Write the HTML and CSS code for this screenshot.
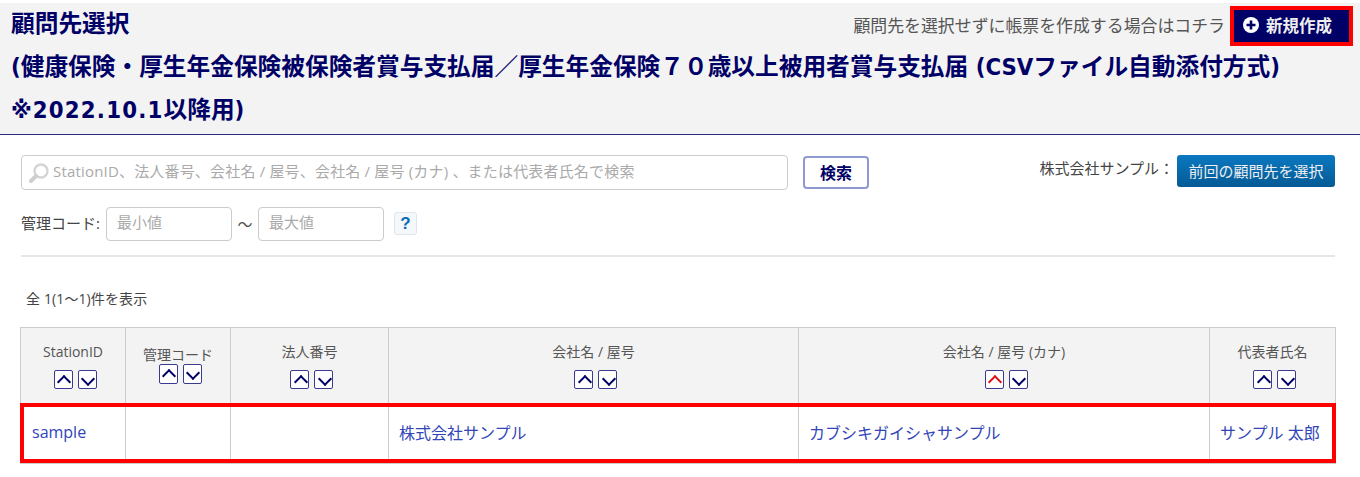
FILE: index.html
```html
<!DOCTYPE html>
<html lang="ja">
<head>
<meta charset="utf-8">
<title>顧問先選択</title>
<link rel="stylesheet" href="styles.css">
</head>
<body>
<header class="page-head">
  <div class="head-top">
    <h1 class="title">顧問先選択</h1>
    <div class="head-action">
      <span class="hint">顧問先を選択せずに帳票を作成する場合はコチラ</span>
      <a class="new-btn">
        <svg class="plus" viewBox="0 0 16 16" width="16" height="16"><circle cx="8" cy="8" r="8" fill="#fff"/><path d="M8 3.5v9M3.5 8h9" stroke="#000066" stroke-width="2.6"/></svg>
        新規作成
      </a>
    </div>
  </div>
  <div class="title">(健康保険・厚生年金保険被保険者賞与支払届／厚生年金保険７０歳以上被用者賞与支払届 (CSVファイル自動添付方式)</div>
  <div class="title">※<span class="date">2022.10.1</span>以降用)</div>
</header>

<section class="search">
  <div class="search-row">
    <div class="search-box">
      <svg class="loupe" viewBox="0 0 22 22" width="22" height="22"><circle cx="13" cy="9" r="6.5" fill="#fff" stroke="#d4d4d4" stroke-width="2.4"/><path d="M8 14l-5 5" stroke="#cfcfcf" stroke-width="4" stroke-linecap="round"/></svg>
      <span class="ph wide">StationID、法人番号、会社名 / 屋号、会社名 / 屋号 (カナ) 、または代表者氏名で検索</span>
    </div>
    <button class="search-btn">検索</button>
    <div class="prev">
      <span class="prev-label">株式会社サンプル：</span>
      <a class="prev-btn">前回の顧問先を選択</a>
    </div>
  </div>
  <div class="code-row">
    <span class="code-label">管理コード:</span>
    <span class="code-input"><span class="ph">最小値</span></span>
    <span class="tilde">～</span>
    <span class="code-input"><span class="ph">最大値</span></span>
    <span class="help">?</span>
  </div>
</section>

<p class="count">全 1(1～1)件を表示</p>

<div class="table-wrap">
<table class="list">
  <thead>
    <tr>
      <th class="c1"><div class="th-label">StationID</div><div class="sort"><a class="s up"></a><a class="s down"></a></div></th>
      <th class="c2 tight"><div class="th-label">管理コード</div><div class="sort"><a class="s big up"></a><a class="s big down"></a></div></th>
      <th class="c3"><div class="th-label">法人番号</div><div class="sort"><a class="s up"></a><a class="s down"></a></div></th>
      <th class="c4"><div class="th-label">会社名 / 屋号</div><div class="sort"><a class="s up"></a><a class="s down"></a></div></th>
      <th class="c5"><div class="th-label">会社名 / 屋号 (カナ)</div><div class="sort"><a class="s up active"></a><a class="s down"></a></div></th>
      <th class="c6"><div class="th-label">代表者氏名</div><div class="sort"><a class="s up"></a><a class="s down"></a></div></th>
    </tr>
  </thead>
  <tbody>
    <tr>
      <td><a>sample</a></td>
      <td></td>
      <td></td>
      <td><a>株式会社サンプル</a></td>
      <td><a>カブシキガイシャサンプル</a></td>
      <td><a>サンプル 太郎</a></td>
    </tr>
  </tbody>
</table>
<div class="row-mark"></div>
</div>
</body>
</html>
```

FILE: styles.css
```css
* { box-sizing: border-box; }
html, body { margin: 0; padding: 0; }
body {
  padding-top: 3px;
  background: #fff;
  color: #444;
  font-family: "Open Sans", "Noto Sans CJK JP", sans-serif;
  font-size: 15px;
}
.page-head {
  height: 132px;
  padding-left: 11px;
  background: #f3f3f3;
  border-bottom: 1px solid #2a2a80;
}
.head-top { display: flex; justify-content: space-between; align-items: flex-start; }
.title {
  margin: 0;
  height: 42.5px;
  line-height: 42px;
  font-family: "DejaVu Sans Condensed", "Noto Sans CJK JP", sans-serif;
  font-size: 23.7px;
  font-weight: 700;
  color: #000066;
  white-space: nowrap;
}
.date { letter-spacing: 1.2px; margin-left: 1px; }
.head-action { display: flex; align-items: center; padding: 3px 7px 0 0; }
.hint { font-size: 16.9px; color: #555; margin-right: 5px; position: relative; top: -2px; }
.new-btn {
  display: flex;
  align-items: center;
  gap: 7px;
  width: 123px;
  height: 40px;
  padding: 0 0 2px 9px;
  background: #000066;
  border: 4px solid #f00;
  color: #eee;
  font-size: 16.5px;
  font-weight: 700;
}
.search { margin: 0 25px 0 21px; height: 122px; border-bottom: 2px solid #e6e6e6; }
.search-row { display: flex; align-items: flex-start; padding-top: 20px; }
.search-box {
  display: flex;
  align-items: center;
  width: 767px;
  height: 35px;
  padding-left: 6px;
  padding-bottom: 5px;
  border: 1px solid #ccc;
  border-radius: 4px;
  background: #fff;
}
.loupe { margin-right: 3px; flex: none; position: relative; top: 3px; }
.ph { color: #aaa; font-size: 15px; }
.ph.wide { letter-spacing: 0.18px; }
.search-btn {
  margin: 1px 0 0 15px;
  width: 66px;
  height: 33px;
  padding: 0 0 2px;
  border: 2px solid #8f9bd0;
  border-radius: 4px;
  background: #fff;
  color: #000066;
  font: 700 16px "Open Sans", "Noto Sans CJK JP", sans-serif;
}
.prev { margin-left: auto; display: flex; align-items: flex-start; }
.prev-label { font-size: 15px; color: #444; padding-top: 2px; margin-right: 3px; }
.prev-btn {
  width: 158px;
  height: 32px;
  line-height: 33px;
  text-align: center;
  border-radius: 3px;
  background: linear-gradient(#0b78c0, #045a95);
  color: #eee;
  font-size: 15px;
}
.code-row { display: flex; align-items: center; margin-top: 16px; height: 35px; }
.code-label { font-size: 15px; color: #444; margin-right: 6px; position: relative; top: -1px; }
.code-input {
  display: flex;
  align-items: center;
  width: 126px;
  height: 34px;
  padding-left: 10px;
  padding-bottom: 5px;
  border: 1px solid #ccc;
  border-radius: 4px;
  background: #fff;
}
.tilde { width: 26px; text-align: center; color: #555; font-size: 15px; }
.help {
  margin-left: 10px;
  width: 23px;
  height: 23px;
  line-height: 21px;
  text-align: center;
  border: 1px solid #dde6ee;
  border-radius: 3px;
  background: #f5f8fb;
  color: #0b6bb5;
  font-size: 17px;
  font-weight: 700;
  font-family: "Liberation Sans", sans-serif;
}
.count { margin: 32px 0 0 26px; height: 38px; font-size: 14px; line-height: 20px; color: #444; letter-spacing: 0.12px; }
.table-wrap { position: relative; margin-left: 20px; width: 1316px; }
.list {
  width: 1315px;
  table-layout: fixed;
  border-collapse: collapse;
  background: #fff;
}
.list th {
  height: 76px;
  padding: 0;
  vertical-align: top;
  background: #f3f3f3;
  border: 1px solid #ccc;
  font-weight: 400;
  font-size: 14px;
  color: #555;
}
.c1 { width: 105px; }
.c2 { width: 105px; }
.c3 { width: 158px; }
.c4 { width: 410px; }
.c5 { width: 411px; }
.c6 { width: 126px; }
.th-label { margin-top: 14px; height: 20px; line-height: 20px; }
.tight .th-label { margin-top: 18px; height: 18px; line-height: 18px; }
.sort { display: flex; justify-content: center; gap: 5px; margin-top: 8px; padding-left: 4px; }
.tight .sort { margin-top: 0; }
.s {
  position: relative;
  display: block;
  width: 19px;
  height: 19px;
  border: 1px solid #3a3a90;
  border-radius: 2px;
  background: #fff;
}
.s.big { height: 20px; }
.s::after {
  content: "";
  position: absolute;
  left: 4.5px;
  width: 8px;
  height: 8px;
  border: solid #000066;
  border-width: 2.5px 0 0 2.5px;
}
.s.up::after { top: 6px; transform: rotate(45deg); }
.s.down::after { top: 2.5px; transform: rotate(225deg); }
.s.active::after { border-color: #e01010; }
.list td {
  height: 60px;
  padding: 0 0 4px 10px;
  border: 1px solid #ccc;
  font-size: 16px;
  white-space: nowrap;
}
.list td:first-child { padding-left: 11px; }
.list td a { color: #3145b8; }
.row-mark {
  position: absolute;
  left: 0;
  right: 0;
  top: 76px;
  height: 60px;
  border: 4px solid #f00;
  pointer-events: none;
}
```
